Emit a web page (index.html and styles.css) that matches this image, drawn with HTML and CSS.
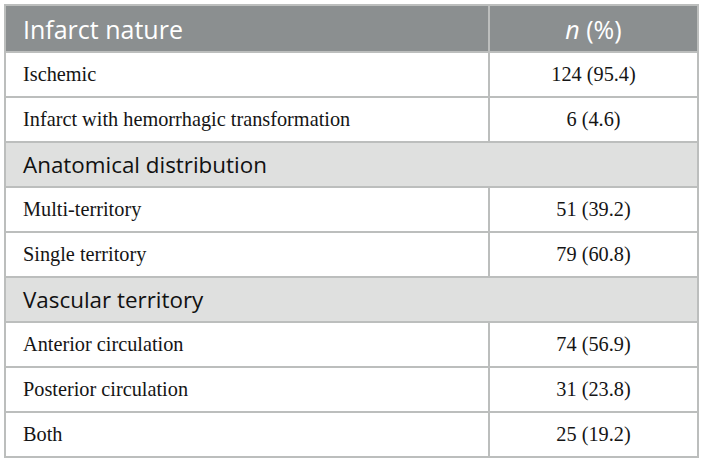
FILE: index.html
```html
<!DOCTYPE html>
<html>
<head>
<meta charset="utf-8">
<link rel="stylesheet" href="styles.css">
</head>
<body>
<div class="wrap">
<table class="tbl">
  <colgroup><col class="c1"><col class="c2"></colgroup>
  <thead>
    <tr class="head"><th class="lbl">Infarct nature</th><th class="val"><i>n</i> (%)</th></tr>
  </thead>
  <tbody>
    <tr><td class="lbl">Ischemic</td><td class="val">124 (95.4)</td></tr>
    <tr><td class="lbl">Infarct with hemorrhagic transformation</td><td class="val">6 (4.6)</td></tr>
    <tr class="sec"><td colspan="2" class="lbl">Anatomical distribution</td></tr>
    <tr><td class="lbl">Multi-territory</td><td class="val">51 (39.2)</td></tr>
    <tr><td class="lbl">Single territory</td><td class="val">79 (60.8)</td></tr>
    <tr class="sec"><td colspan="2" class="lbl">Vascular territory</td></tr>
    <tr><td class="lbl">Anterior circulation</td><td class="val">74 (56.9)</td></tr>
    <tr><td class="lbl">Posterior circulation</td><td class="val">31 (23.8)</td></tr>
    <tr><td class="lbl">Both</td><td class="val">25 (19.2)</td></tr>
  </tbody>
</table>
</div>
</body>
</html>
```

FILE: styles.css
```css
html, body { margin: 0; padding: 0; background: #fff; }
.wrap { padding: 4px 0 0 4px; }
.tbl {
  border-collapse: collapse;
  width: 693px;
  table-layout: fixed;
  font-family: "Liberation Serif", "Times New Roman", serif;
  font-size: 20.3px;
  color: #151515;
}
.c1 { width: 484px; }
.c2 { width: 209px; }
.tbl td, .tbl th {
  border: 2px solid #bcbebd;
  padding: 0 0 0 17px;
  height: 43px;
  vertical-align: middle;
  font-weight: normal;
}
.tbl .val { text-align: center; padding: 0; }
.head th {
  background: #8b8f90;
  color: #fff;
  font-family: "Open Sans", "Liberation Sans", sans-serif;
  font-size: 25px;
  height: 45px;
  text-align: left;
}
.head th.val { text-align: center; }
.sec td {
  background: #dfe0df;
  font-family: "Open Sans", "Liberation Sans", sans-serif;
  font-size: 22.4px;
  color: #111;
}
```
